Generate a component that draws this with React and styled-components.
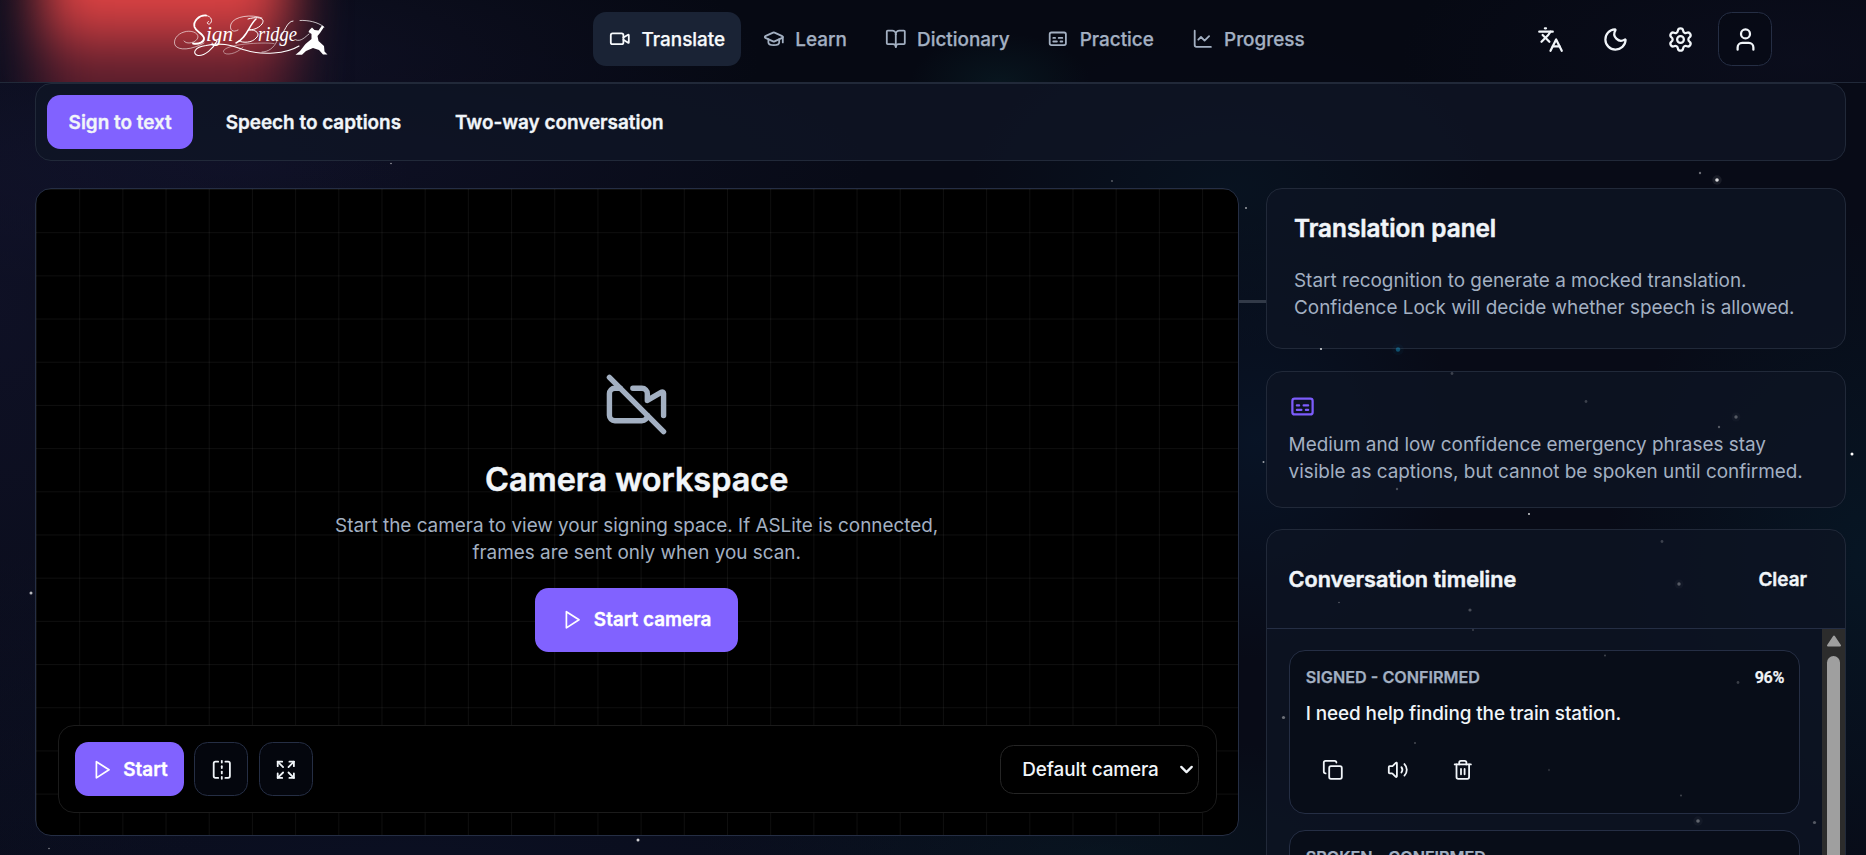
import React from 'react';
import styled, { createGlobalStyle } from 'styled-components';
import {
    Video, VideoOff, GraduationCap, BookOpen, Captions, ChartLine, Languages, Moon, Settings,
    User, FlipHorizontal, Expand, Copy, Volume2, Trash2, ChevronDown,
} from 'lucide-react';

const navItems = [
    { label: 'Translate', icon: Video, active: true },
    { label: 'Learn', icon: GraduationCap },
    { label: 'Dictionary', icon: BookOpen },
    { label: 'Practice', icon: Captions },
    { label: 'Progress', icon: ChartLine },
];

const modes = ['Sign to text', 'Speech to captions', 'Two-way conversation'];

const messages = [
    { meta: 'SIGNED - CONFIRMED', score: '96%', text: 'I need help finding the train station.' },
    { meta: 'SPOKEN - CONFIRMED', text: 'The station is two blocks away.' },
];

// x, y, radius, opacity, colour
const stars = [
    [391, 163.5, 0.8, 0.6], [1112, 181, 0.9, 0.35], [1246, 208, 1, 0.6], [1700, 173, 1.2, 0.4],
    [1717, 180, 1.8, 0.85], [1321, 349, 1.1, 0.8], [1263.5, 462, 1, 0.6], [1852, 454, 1.5, 1],
    [1529, 514, 0.9, 0.9], [31, 593, 1.5, 0.7], [638, 840, 1.5, 0.8], [49, 848.5, 0.8, 0.5],
    [1398, 349.5, 2.2, 0.5, '#1593c4'],
];

// the ones that shine through the side panels
const faintStars = [
    [1452, 373.5, 1.4, 0.2], [1586, 401.5, 1.4, 0.2], [1736, 417, 1.7, 0.3], [1719, 427, 1.2, 0.3],
    [1397, 489, 1.2, 0.25], [1662, 541.5, 1.4, 0.2], [1679, 584, 1.7, 0.3], [1339, 602.5, 0.7, 0.4],
    [1470, 610, 1.6, 0.25], [1473, 630, 1, 0.2], [1605, 655.5, 0.9, 0.25], [1738, 682.5, 1.4, 0.2],
    [1283.5, 717.5, 1.6, 0.4], [1415, 743, 1, 0.25], [1549, 770, 1.2, 0.12], [1681, 795.5, 0.9, 0.25],
    [1698, 821, 1.8, 0.35], [1814.5, 822.5, 1.6, 0.3],
];

function Stars({ items }){
    return (
        <StarField viewBox='0 0 1866 855'>
            {items.map(([x, y, r, o, fill = '#fff']) => (
                <g key={`${x}-${y}`} fill={fill} opacity={o}>
                    {r > 1.6 && <circle cx={x} cy={y} r={r * 2.6} opacity={0.09} />}
                    <circle cx={x} cy={y} r={r} />
                </g>
            ))}
        </StarField>
    )
}

function PlayIcon(){
    return (
        <svg width='21.6' height='21.6' viewBox='0 0 24 24' fill='none' stroke='currentColor' strokeWidth='1.9' strokeLinejoin='round'>
            <polygon points='6 3 20 12 6 21 6 3' />
        </svg>
    )
}

function Logo(){
    return (
        <LogoSvg viewBox='173 10 160 50' role='img' aria-label='SignBridge'>
            <g fill='none' stroke='#fff' strokeLinecap='round'>
                <path d='M206 15.5 C199 15 193 21 194.5 27 C196 32 203 33 204 38 C204.5 42 199 44.5 193 43.5' strokeWidth='1.8' />
                <path d='M206 15.5 C212 16 213 22 209.5 24 C207 24.5 206.5 22 208.5 21.5' strokeWidth='0.9' />
                <path d='M184 41 C186 45 197 43 198 37 C198 32 190 30 184 32 C177 34 173 40 175 45 C178 51 192 50 204 43' strokeWidth='0.7' opacity='0.85' />
                <path d='M217 41 C213 49 205 56 198 55.5 C192 54 194 47 206 45.5 C224 42 232 46 245 50 C262 55.5 286 54 299 46' strokeWidth='1.1' />
                <path d='M274 43.5 C262 42 226 44 223.5 51 C223 56 236 55 243 47' strokeWidth='0.6' opacity='0.75' />
                <path d='M262 18 C252 14 234 16 231 24 C229 30 233 33 238 30' strokeWidth='0.8' opacity='0.85' />
                <path d='M256 19 C249 25 247 38 236 43' strokeWidth='1.5' />
                <path d='M248 19 C258 16 266 18 262 24 C258 29 252 30 248 30 C256 29 261 34 256 38 C252 43 243 43 239 41' strokeWidth='1' />
                <path d='M280 38 C284 33 287 21 293 21' strokeWidth='0.9' />
                <path d='M277 41 C274 48 268 52 262 52' strokeWidth='0.7' opacity='0.8' />
                <path d='M296 40 C301 42 305 37 309 34' strokeWidth='0.8' opacity='0.85' />
                <path d='M300 20.5 C308 20 318 22 324 27' strokeWidth='0.8' opacity='0.9' />
            </g>
            <LogoText x='206' y='41' textLength='27' lengthAdjust='spacingAndGlyphs'>ign</LogoText>
            <LogoText x='258' y='41' textLength='39' lengthAdjust='spacingAndGlyphs'>ridge</LogoText>
            <path d='M309.5 30 L312 27.5 L314.5 30 L318.5 30.5 L322 25.5 L324 27 L320 33 L317.5 36 L318.5 41 L324 46 L324.5 51.5 L327.5 54.5 L323 54.5 L319 50 L313 48 L306 51 L302 54.8 L295.5 54.8 L300 51 L305.5 44 L311.5 39 L311.5 34 L308.5 32 Z' fill='#fff' />
        </LogoSvg>
    )
}

function CameraWorkspace(){
    return (
        <Camera>
            <CameraEmpty>
                <VideoOff size={65} />
                <CameraTitle>Camera workspace</CameraTitle>
                <CameraText>
                    Start the camera to view your signing space. If ASLite is connected, frames are sent only when you scan.
                </CameraText>
                <PrimaryButton $large><PlayIcon />Start camera</PrimaryButton>
            </CameraEmpty>
            <CameraBar>
                <PrimaryButton><PlayIcon />Start</PrimaryButton>
                <IconButton $bordered><FlipHorizontal size={21.6} /></IconButton>
                <IconButton $bordered><Expand size={21.6} /></IconButton>
                <CameraSelect>Default camera<ChevronDown size={21} strokeWidth={2.6} /></CameraSelect>
            </CameraBar>
        </Camera>
    )
}

function Message({ meta, score, text }){
    return (
        <MessageCard>
            <MessageTop>
                <span>{meta}</span>
                {score && <Score>{score}</Score>}
            </MessageTop>
            <MessageText>{text}</MessageText>
            <MessageActions>
                <IconButton><Copy size={21.6} /></IconButton>
                <IconButton><Volume2 size={21.6} /></IconButton>
                <IconButton><Trash2 size={21.6} /></IconButton>
            </MessageActions>
        </MessageCard>
    )
}

function App(){
    return (
        <Page>
            <GlobalStyle />
            <Stars items={stars} />
            <Header>
                <RedGlow />
                <Logo />
                <Nav>
                    {navItems.map(({ label, icon: Icon, active }) => (
                        <NavLink key={label} $active={active}>
                            <Icon size={21.6} />
                            {label}
                        </NavLink>
                    ))}
                </Nav>
                <Tools>
                    <IconButton><Languages size={27} /></IconButton>
                    <IconButton><Moon size={27} /></IconButton>
                    <IconButton><Settings size={27} /></IconButton>
                    <IconButton $bordered><User size={27} /></IconButton>
                </Tools>
            </Header>
            <Main>
                <ModeBar>
                    {modes.map((mode, i) => <ModeButton key={mode} $active={i === 0}>{mode}</ModeButton>)}
                </ModeBar>
                <Columns>
                    <CameraWorkspace />
                    <Connector />
                    <Side>
                        <Panel $pad='27px' $height='161px'>
                            <PanelTitle>Translation panel</PanelTitle>
                            <PanelText $top='23px'>
                                Start recognition to generate a mocked translation. Confidence Lock will decide whether speech is allowed.
                            </PanelText>
                        </Panel>
                        <Panel $pad='21.6px' $height='137px'>
                            <Captions size={27} color='#7c5cfc' />
                            <PanelText $top='10.8px'>
                                Medium and low confidence emergency phrases stay visible as captions, but cannot be spoken until confirmed.
                            </PanelText>
                        </Panel>
                        <Timeline>
                            <TimelineHeader>
                                <TimelineTitle>Conversation timeline</TimelineTitle>
                                <Clear>Clear</Clear>
                            </TimelineHeader>
                            <TimelineBody>
                                <MessageList>
                                    {messages.map((m) => <Message key={m.meta} {...m} />)}
                                </MessageList>
                                <Scrollbar>
                                    <svg width='16' height='12' viewBox='0 0 16 12'>
                                        <path d='M8 1.5 L14 10.5 H2 Z' fill='#9f9f9f' stroke='#9f9f9f' strokeWidth='2' strokeLinejoin='round' />
                                    </svg>
                                    <Thumb />
                                </Scrollbar>
                            </TimelineBody>
                        </Timeline>
                    </Side>
                </Columns>
            </Main>
            <Stars items={faintStars} />
        </Page>
    )
}

const GlobalStyle = createGlobalStyle`
    * {
        box-sizing: border-box;
    }
    body {
        margin: 0;
        overflow: hidden;
        background: #060914;
        color: #f1f5f9;
        font-family: Inter, sans-serif;
        font-size: 18.9px;
        line-height: 27px;
    }
    h1, h2, h3, p {
        margin: 0;
    }
    h1, h2, h3 {
        -webkit-text-stroke: 0.5px currentColor;
    }
    button {
        font: inherit;
        color: inherit;
        background: none;
        border: 0;
        padding: 0;
        -webkit-text-stroke: 0.35px currentColor;
    }
    svg {
        flex-shrink: 0;
    }
`;

const Page = styled.div`
    position: relative;
    height: 855px;
    display: flex;
    flex-direction: column;
    overflow: hidden;
    background:
        radial-gradient(ellipse 420px 620px at 0 300px, rgba(20, 21, 48, 0.55), transparent),
        radial-gradient(ellipse 620px 130px at 250px 165px, rgba(19, 20, 46, 0.6), transparent),
        radial-gradient(ellipse 260px 160px at 1230px 190px, rgba(8, 30, 46, 0.4), transparent),
        radial-gradient(ellipse 200px 220px at 1256px 440px, rgba(8, 28, 52, 0.5), transparent),
        radial-gradient(ellipse 260px 340px at 1866px 560px, rgba(6, 30, 46, 0.55), transparent),
        radial-gradient(ellipse 400px 120px at 1100px 855px, rgba(8, 32, 42, 0.4), transparent),
        radial-gradient(ellipse 800px 400px at 400px 900px, rgba(14, 20, 46, 0.5), transparent),
        #080b17;
`;

const StarField = styled.svg`
    position: absolute;
    inset: 0;
    width: 1866px;
    height: 855px;
    pointer-events: none;
`;

const Header = styled.header`
    position: relative;
    height: 83px;
    flex-shrink: 0;
    display: grid;
    grid-template-columns: 420px 1fr 420px;
    align-items: center;
    padding: 0 94px 4px 173px;
    overflow: hidden;
    border-bottom: 1px solid #212939;
    background:
        radial-gradient(ellipse 90px 50px at 1000px 83px, rgba(10, 34, 42, 0.5), transparent),
        radial-gradient(ellipse 560px 160px at 200px 60px, rgba(20, 20, 44, 0.7), transparent),
        radial-gradient(ellipse 400px 160px at 1800px 60px, rgba(14, 16, 34, 0.6), transparent),
        rgba(5, 8, 18, 0.7);
`;

const RedGlow = styled.div`
    position: absolute;
    left: 40px;
    top: -80px;
    width: 250px;
    height: 260px;
    filter: blur(27px);
    background: linear-gradient(#e04545 0, #de4343 92px, #a23038 116px, #662230 136px, #521b2a 160px);
`;

const LogoSvg = styled.svg`
    position: relative;
    align-self: start;
    width: 160px;
    height: 50px;
    margin-top: 10px;
`;

const LogoText = styled.text`
    font: italic 20px 'Liberation Serif', serif;
    fill: #fff;
`;

const Nav = styled.nav`
    display: flex;
    gap: 5.4px;
`;

const NavLink = styled.a`
    display: flex;
    align-items: center;
    gap: 10.8px;
    height: 54px;
    padding: 0 16.2px;
    border-radius: 13px;
    font-weight: 500;
    -webkit-text-stroke: 0.25px currentColor;
    color: ${({ $active }) => ($active ? '#f8fafc' : '#a3b0c2')};
    background: ${({ $active }) => ($active ? '#1a2335' : 'transparent')};
`;

const Tools = styled.div`
    display: flex;
    justify-content: flex-end;
    gap: 10.8px;
`;

const IconButton = styled.button`
    width: 54px;
    height: 54px;
    display: flex;
    align-items: center;
    justify-content: center;
    border-radius: 13.5px;
    border: 1px solid ${({ $bordered }) => ($bordered ? '#252e44' : 'transparent')};
    background: ${({ $bordered }) => ($bordered ? 'rgba(6, 9, 20, 0.65)' : 'none')};
`;

const Main = styled.main`
    padding: 0 20px 0 35px;
`;

const ModeBar = styled.div`
    display: flex;
    gap: 10.8px;
    height: 78px;
    padding: 11px;
    border: 1px solid #212939;
    border-radius: 16px;
    background: rgba(15, 22, 38, 0.75);
`;

const ModeButton = styled.button`
    height: 54px;
    padding: 0 21.6px;
    border-radius: 13.5px;
    font-weight: 600;
    background: ${({ $active }) => ($active ? '#8162ff' : 'none')};
`;

const Columns = styled.div`
    display: flex;
    align-items: flex-start;
    margin-top: 27px;
`;

const Camera = styled.section`
    width: 1204px;
    height: 648px;
    display: flex;
    flex-direction: column;
    padding: 21.6px 21px 21.6px 22.4px;
    border: 1px solid #252e44;
    border-radius: 16px;
    background-color: #000;
    background-image:
        linear-gradient(90deg, rgba(255, 255, 255, 0.06) 1px, transparent 1px),
        linear-gradient(rgba(255, 255, 255, 0.06) 1px, transparent 1px);
    background-size: 43.2px 43.2px;
`;

const CameraEmpty = styled.div`
    flex: 1;
    display: flex;
    flex-direction: column;
    align-items: center;
    padding: 161px 2px 0 0;
    text-align: center;
    color: #a3b0c2;
`;

const CameraTitle = styled.h1`
    margin-top: 21px;
    font-size: 32.4px;
    line-height: 43px;
    font-weight: 600;
    color: #f1f5f9;
`;

const CameraText = styled.p`
    width: 605px;
    margin: 11px 0 22.4px;
`;

const PrimaryButton = styled.button`
    display: flex;
    align-items: center;
    gap: 10.8px;
    height: ${({ $large }) => ($large ? '64px' : '54px')};
    padding: 0 ${({ $large }) => ($large ? '27px' : '16px')};
    border-radius: 13.5px;
    font-weight: 600;
    color: #fff;
    background: #8162ff;

    svg {
        margin-left: -0.5px;
    }
`;

const CameraBar = styled.div`
    display: flex;
    align-items: center;
    gap: 10.8px;
    height: 88px;
    padding: 0 16.8px 0 16px;
    border: 1px solid #1b1b1b;
    border-radius: 16px;
    background: #000;
`;

const CameraSelect = styled.div`
    width: 199px;
    height: 49px;
    margin-left: auto;
    padding: 0 1px 0 21px;
    display: flex;
    align-items: center;
    justify-content: space-between;
    border: 1px solid #252525;
    border-radius: 13.5px;
    font-weight: 500;
    letter-spacing: -0.09px;
`;

const Connector = styled.div`
    width: 27px;
    height: 3px;
    margin-top: 112px;
    background: #323a48;
`;

const Side = styled.aside`
    flex: 1;
    display: flex;
    flex-direction: column;
    gap: 21.6px;
`;

const Panel = styled.section`
    height: ${({ $height }) => $height};
    padding: ${({ $pad }) => $pad};
    border: 1px solid #212939;
    border-radius: 16px;
    background: rgba(14, 20, 35, 0.8);

    svg {
        display: block;
    }
`;

const PanelTitle = styled.h2`
    margin-top: -4px;
    font-size: 24.3px;
    line-height: 32px;
    font-weight: 600;
`;

const PanelText = styled.p`
    margin-top: ${({ $top }) => $top};
    color: #a3b0c2;
`;

const Timeline = styled(Panel)`
    height: 520px;
    padding: 0;
`;

const TimelineHeader = styled.div`
    height: 99px;
    display: flex;
    align-items: center;
    justify-content: space-between;
    padding: 0 38px 0 21.6px;
    border-bottom: 1px solid #252e44;
`;

const TimelineTitle = styled.h3`
    font-size: 21.6px;
    font-weight: 600;
`;

const Clear = styled.button`
    font-weight: 600;
`;

const TimelineBody = styled.div`
    display: flex;
    height: 420px;
`;

const MessageList = styled.div`
    flex: 1;
    display: flex;
    flex-direction: column;
    gap: 16px;
    padding: 21px 21.6px;
`;

const MessageCard = styled.article`
    height: 164px;
    flex-shrink: 0;
    padding: 12.5px 15.4px 12.5px 16.2px;
    border: 1px solid #252e44;
    border-radius: 16px;
    background: rgba(8, 12, 22, 0.8);
`;

const MessageTop = styled.div`
    display: flex;
    justify-content: space-between;
    font-size: 16.2px;
    font-weight: 600;
    -webkit-text-stroke: 0.25px currentColor;
    color: #a3b0c2;
`;

const Score = styled.span`
    font-family: Roboto, sans-serif;
    letter-spacing: -0.4px;
    color: #f1f5f9;
`;

const MessageText = styled.p`
    margin-top: 9px;
    font-weight: 500;
    letter-spacing: -0.09px;
`;

const MessageActions = styled.div`
    display: flex;
    gap: 10.8px;
    margin-top: 16px;
`;

const Scrollbar = styled.div`
    width: 23px;
    display: flex;
    flex-direction: column;
    align-items: center;
    padding-top: 6px;
    background: #2c2c2c;
`;

const Thumb = styled.div`
    width: 13px;
    flex: 1;
    margin-top: 9px;
    border-radius: 7px;
    background: #9f9f9f;
`;

export default App;
